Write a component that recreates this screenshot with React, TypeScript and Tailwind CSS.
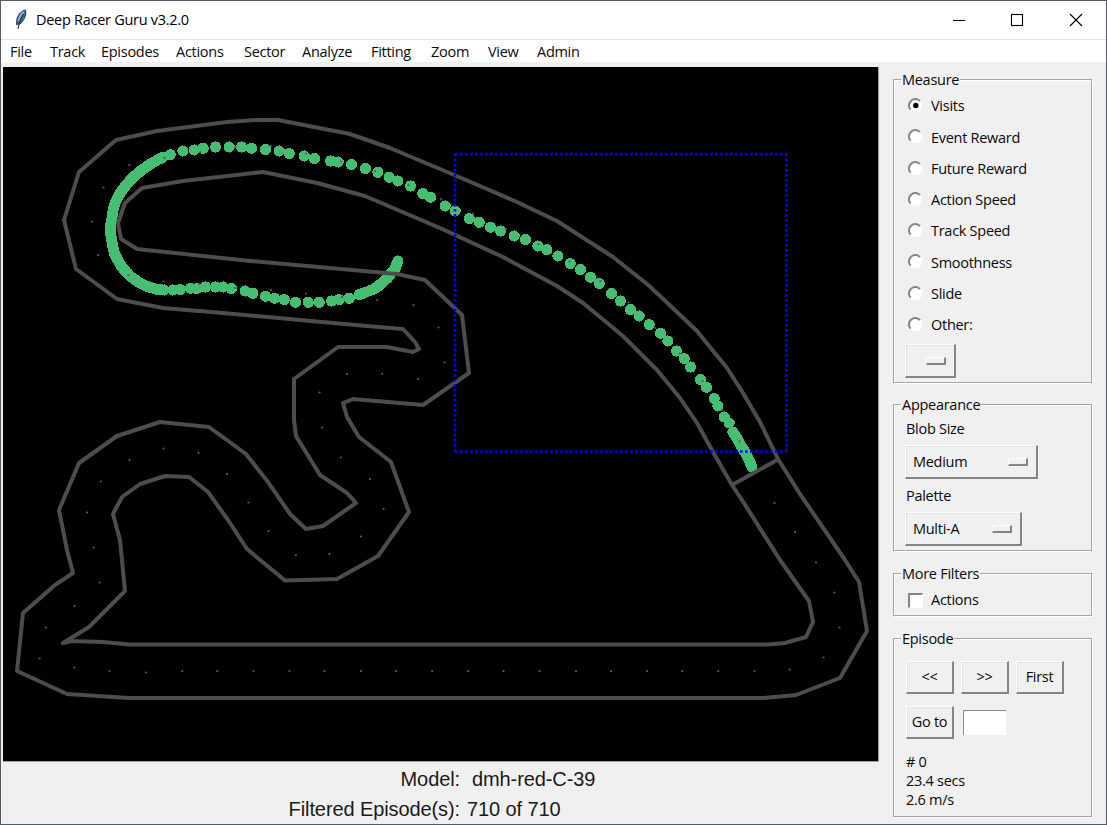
import React from "react";

type Pt = [number, number];

const OUTER =
  "73,573 55,585 23,613 17,671 67,694 98,696 128,698 764,698 796,695 840,678 867,631 859,582 845,560 800,494 778,459 760,422 743,393 727,368 697,331 660,296 647,284 613,257 557,221 517,202 480,186 440,169 390,148 350,134 278,120 257,120 227,122 157,131 116,140 79,172 64,220 76,269 117,299 163,308 223,313 300,320 367,326 403,329 415,342 419,349 413,352 387,347 338,347 294,379 294,420 296,436 320,475 347,493 356,503 323,526 306,529 290,514 268,482 246,454 209,427 160,422 117,436 79,463 59,510 67,550";

const INNER =
  "732,485 742,500 780,560 809,601 813,622 806,637 785,643 768,644.5 129,644.5 103,642 72,641 63,643 89,627 125,591 120,540 113,514 122,497 140,484 165,476 189,477 208,492 228,520 247,549 285,580.5 337,579 378,556 409,512 391,462 359,437 347,417 343,403 353,399 423,405 469,373 462,315 425,280 397,274 250,261 137,249 121,239 118,223 125,203 142,188 183,181 263,172 317,183 365,196 440,228 503,257 557,286 583,303 623,336 657,370 680,398 697,423 713,452";

const BLOBS: Pt[] = [
  [170, 154.5], [182.7, 150.7], [194, 149.7], [203, 148], [215.3, 146.7], [229, 146.7], [241.3, 146.7], [251.3, 148], [265.3, 149.3], [279, 150.7], [289, 153.3],
  [304, 155.7], [314.3, 158.3], [330.3, 160.7], [338, 161.7], [351.3, 164.3], [365.3, 168.3], [377.7, 172], [389, 177], [397.7, 180.7], [410.3, 185.7], [422.7, 193.3], [430.3, 197],
  [445, 205.7], [455, 210.7], [469, 218.3], [479, 222], [490.3, 227], [500.3, 230.7], [514, 235.7], [525.3, 239.3], [537.7, 245.7], [546.7, 249.3], [557.7, 255.7], [570, 263.3],
  [580.3, 269.3], [590.3, 277], [599, 283.3], [611.3, 293.3], [620.3, 300.7], [630.3, 309.3], [639, 315.7], [649, 324.3], [660.3, 333], [667.7, 340.7], [676.3, 350.7], [684, 358.3],
  [690.3, 366.7], [700.3, 379.3], [706.3, 387], [714, 398.3], [717.7, 405.7], [724, 416.7], [729, 422.7],
  [172.7, 289.7], [180, 289.3], [190.3, 288], [196.7, 288.3], [205.3, 286.7],
  [215.3, 286.7], [223, 286.7], [231.3, 288.3], [245, 290.7], [252.7, 293], [265.3, 296], [274.3, 298], [284, 299.3], [295.3, 302], [308, 302], [319, 302], [331.3, 300.7],
  [339, 299.3], [349, 298],
];

// Slow stretches, where neighbouring samples overlap.
const DENSE_RUNS: Pt[][] = [
  [
    [162.7, 157], [156.7, 160], [151, 163.3], [145.7, 166.7], [141, 170.3], [136.7, 173.7], [132.7, 177.3], [129, 181.3], [125, 186], [121.3, 191], [118.3, 195.7], [115.7, 201], [113.7, 206.7],
    [112.3, 212.7], [111.7, 218.7], [110.7, 224], [110.3, 229.3], [110.7, 235], [111.7, 240.7], [112.7, 246.7], [114, 252.3], [116.3, 257.3], [119, 262.3], [122, 267], [125.7, 271.3],
    [130, 275.7], [134.7, 279.3], [139.7, 282.7], [145, 285.3], [150.7, 287.3], [156.7, 289], [164, 289.7],
  ],
  [[732.7, 431.7], [736, 436.7], [739.7, 443.3], [743.3, 449.3], [746.7, 455], [749.3, 460.7], [751.7, 466.7]],
  [[359, 294.3], [365.3, 292], [372.7, 289.3], [378.3, 285.7], [382.7, 281.7], [387.3, 277.7], [391, 272.7], [394.3, 269.3], [396, 265], [397.7, 260.7]],
];

const withMidpoints = (run: Pt[]): Pt[] =>
  run.flatMap((p, i): Pt[] => {
    const next = run[i + 1];
    return next ? [p, [(p[0] + next[0]) / 2, (p[1] + next[1]) / 2]] : [p];
  });

const ALL_BLOBS: Pt[] = [...BLOBS, ...DENSE_RUNS.flatMap(withMidpoints)];

const WAYPOINTS: Pt[] = [
  [99.3, 582.3], [74.3, 606], [45.7, 627.3], [39.3, 658.3], [74.3, 667.3], [109.3, 671], [145.7, 672.3], [182, 671], [217, 671], [253.3, 671], [289.3, 671], [324.3, 671],
  [360.7, 671], [395.7, 671], [432, 671], [468, 671], [503.3, 671], [539.3, 671], [575.7, 671], [610.7, 671], [647, 671], [682, 671], [718, 671], [754.3, 671],
  [789.3, 669.3], [823.3, 657.3], [839.3, 627.3], [834.3, 592.3], [815.7, 562.3], [795, 532], [774.3, 503],
  [93.3, 547.3], [87, 512.3], [100.7, 481.3], [129.3, 460], [163.3, 448.3], [198.3, 452.7], [227, 473.7], [248.3, 502.3], [268.3, 531], [295.7, 555], [329.3, 553.7], [360.7, 536.3],
  [383.3, 508.7], [369.7, 478.7], [340.7, 457.3], [322, 427.3], [319.3, 392.3], [347, 373.7], [382, 373.7], [418, 378.7], [444.3, 362.3], [438.3, 327.3], [413.3, 305], [377, 300],
  [341.7, 296.7], [305.7, 293.3], [270.7, 290], [235, 287.7], [199, 284], [163.3, 281.3], [128.3, 275], [98, 255], [92, 221.3], [103.3, 187.3], [129.3, 165], [164.3, 157.7],
  [200, 152], [235.3, 146.7], [270.7, 146], [305.7, 153.3], [340.7, 161.3], [374.7, 171], [408.3, 185], [441, 198.7], [473, 213.3], [505.7, 228.7], [538.3, 244], [569.3, 261.3],
  [600, 281], [628.3, 302.3], [655, 327.7], [679.3, 353.3], [702.3, 381], [722.3, 410], [739.3, 441],
];

function TrackCanvas() {
  return (
    <svg className="block h-[695px] w-[876px] border-r border-b border-[#a0a0a0] bg-black" viewBox="3 67 875 694">
      <g fill="#46be71" shapeRendering="crispEdges">
        {ALL_BLOBS.map(([x, y], i) => (
          <circle key={i} cx={x + 0.2} cy={y + 0.3} r="5.6" />
        ))}
      </g>
      <g fill="none" stroke="#4d4d4d" strokeWidth="4" strokeLinejoin="round">
        <polygon points={OUTER} />
        <polygon points={INNER} />
        <path d="M732 485L778 459.500" />
      </g>
      <g fill="#5a5a5a">
        {WAYPOINTS.map(([x, y], i) => (
          <circle key={i} cx={x + 0.2} cy={y + 0.2} r="1.1" />
        ))}
      </g>
      <path
        d="M455 154H787M455 451.500H787M455 154V451M786.500 154V451"
        fill="none"
        stroke="#0000ff"
        strokeWidth="2.600"
        strokeDasharray="2.600 2.400"
      />
    </svg>
  );
}

function Feather() {
  return (
    <svg className="h-[22px] w-[14px]" viewBox="0 0 14 22">
      <path d="M11.500 1C8 1.500 4.500 5 3 9.500L2.500 15.500L6 15C9 12.500 11 9 11.800 5Z" fill="#3f6fae" stroke="#2a3547" strokeWidth="1" />
      <path d="M9.800 2.800C7 5 5.200 8 4.400 12" stroke="#8fbbe8" strokeWidth="1.600" fill="none" />
      <path d="M9.500 5C7 9 5 14 4 20" stroke="#1e2733" strokeWidth="1" fill="none" />
    </svg>
  );
}

function Radio({ checked }: { checked?: boolean }) {
  return (
    <svg className="h-[15px] w-[15px] shrink-0" viewBox="0 0 15 15">
      <circle cx="7.500" cy="7.500" r="6.600" fill="#fff" />
      <path d="M2.600 11.600A6 6 0 0 1 12 3.100" fill="none" stroke="#858585" strokeWidth="2" />
      {checked && <circle cx="7.800" cy="7.500" r="2.700" fill="#000" />}
    </svg>
  );
}

function Group({ title, className, children }: { title: string; className: string; children: React.ReactNode }) {
  return (
    <section
      className={`flex w-[199px] flex-col border border-[#a5a5a5] pl-[11px] shadow-[1px_1px_0_#fff,inset_1px_1px_0_#fff] ${className}`}
    >
      <h2 className="-mt-[11px] -ml-[4px] h-[22px] self-start bg-[#f0f0f0] px-px leading-[22px]">{title}</h2>
      {children}
    </section>
  );
}

const RAISED =
  "border-t border-l border-r-2 border-b-2 border-t-white border-l-white border-r-[#858585] border-b-[#858585] bg-[#f0f0f0] shadow-[inset_1px_1px_0_#e3e3e3]";

function OptionMenu({ label, className }: { label: string; className: string }) {
  return (
    <button className={`${RAISED} flex h-[34px] items-center justify-between pr-[8px] pl-[7px] ${className}`}>
      <span className="pt-px">{label}</span>
      <span className="h-[8px] w-[20px] border-t border-l border-r-2 border-b-2 border-t-white border-l-white border-r-[#858585] border-b-[#858585]" />
    </button>
  );
}

function PushButton({ label }: { label: string }) {
  return <button className={`${RAISED} h-[33px] w-[48px] text-center`}>{label}</button>;
}

const MENUS: [string, string][] = [
  ["File", "w-[40px]"],
  ["Track", "w-[51px]"],
  ["Episodes", "w-[75px]"],
  ["Actions", "w-[68px]"],
  ["Sector", "w-[58px]"],
  ["Analyze", "w-[69px]"],
  ["Fitting", "w-[60px]"],
  ["Zoom", "w-[57px]"],
  ["View", "w-[49px]"],
  ["Admin", "w-[60px]"],
];

const MEASURES = ["Visits", "Event Reward", "Future Reward", "Action Speed", "Track Speed", "Smoothness", "Slide", "Other:"];

export default function App() {
  return (
    <div className="flex h-[825px] w-[1107px] flex-col overflow-hidden border border-[#555a68] bg-[#f0f0f0] font-['Open_Sans',sans-serif] text-[14.5px] tracking-[-0.28px] text-[#0a0a0a]">
      <header className="flex h-[39px] shrink-0 items-center border-b border-[#e2e2e2] bg-white pl-[13px] text-black">
        <Feather />
        <h1 className="ml-[8px] grow">Deep Racer Guru v3.2.0</h1>
        <svg className="h-[14px] w-[134px]" viewBox="0 0 134 14" fill="none" stroke="#000" strokeWidth="1.100">
          <path d="M1 7.500H13" />
          <rect x="59.500" y="1.500" width="11" height="11" />
          <path d="M118 1L130 13M130 1L118 13" />
        </svg>
        <span className="w-[20px]" />
      </header>
      <nav className="flex h-[22px] shrink-0 items-center bg-white pt-px pl-[9px]">
        {MENUS.map(([name, w]) => (
          <span key={name} className={`${w} shrink-0 whitespace-nowrap`}>
            {name}
          </span>
        ))}
      </nav>
      <div className="flex grow">
        <main className="flex w-[892px] shrink-0 flex-col pt-[5px] pl-[2px]">
          <TrackCanvas />
          <dl className="grid h-[62px] grid-cols-[457px_1fr] grid-rows-[30px_30px] font-['Liberation_Sans',Arial,sans-serif] text-[20px] leading-[35px] tracking-[-0.1px] whitespace-pre text-[#1a1a1a]">
            <dt className="text-right">Model:</dt>
            <dd className="pl-[12px]">dmh-red-C-39</dd>
            <dt className="text-right">Filtered Episode(s):</dt>
            <dd className="pl-[7px]">710 of 710</dd>
          </dl>
        </main>
        <aside className="flex flex-col pt-[17px]">
          <Group title="Measure" className="h-[304px]">
            <div className="-mt-px flex flex-col">
              {MEASURES.map((m, i) => (
                <label key={m} className="flex h-[31.25px] items-center gap-[8px] pl-[3px]">
                  <Radio checked={i === 0} />
                  <span className="pt-px">{m}</span>
                </label>
              ))}
            </div>
            <OptionMenu label="" className="mt-[4px] w-[51px]" />
          </Group>
          <Group title="Appearance" className="mt-[21px] h-[147px]">
            <span className="mt-[3px] ml-px h-[20px] leading-[20px]">Blob Size</span>
            <OptionMenu label="Medium" className="mt-[6px] w-[133px]" />
            <span className="mt-[7px] ml-px h-[20px] leading-[20px]">Palette</span>
            <OptionMenu label="Multi-A" className="mt-[6px] w-[117px]" />
          </Group>
          <Group title="More Filters" className="mt-[22px] h-[43px]">
            <label className="flex h-[30px] items-center gap-[8px] pl-[3px]">
              <span className="h-[15px] w-[15px] border-t-2 border-l-2 border-r border-b border-t-[#858585] border-l-[#858585] border-r-white border-b-white bg-white" />
              <span>Actions</span>
            </label>
          </Group>
          <Group title="Episode" className="mt-[22px] h-[179px]">
            <div className="mt-[11px] ml-px flex gap-[7px]">
              <PushButton label="<<" />
              <PushButton label=">>" />
              <PushButton label="First" />
            </div>
            <div className="mt-[12px] ml-px flex items-center gap-[9px]">
              <PushButton label="Go to" />
              <input className="h-[25px] w-[43px] border-t border-l border-t-[#8c8c8c] border-l-[#8c8c8c] bg-white" />
            </div>
            <div className="mt-[13px] ml-px flex flex-col leading-[19px]">
              <span># 0</span>
              <span>23.4 secs</span>
              <span>2.6 m/s</span>
            </div>
          </Group>
        </aside>
      </div>
    </div>
  );
}
